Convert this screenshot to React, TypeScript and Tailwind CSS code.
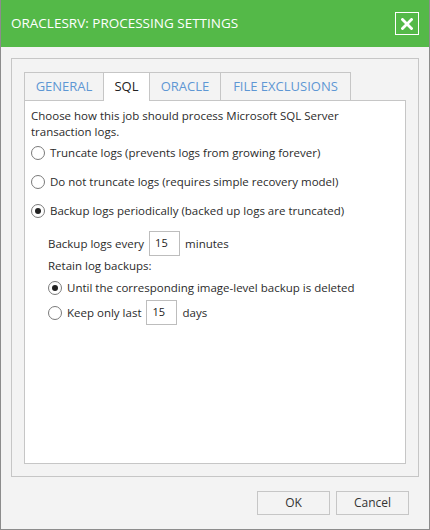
import React from "react";

const font = { fontFamily: '"Open Sans", "Noto Sans", sans-serif' };

function Radio({ checked }: { checked?: boolean }) {
  return (
    <span className="w-[14px] h-[14px] rounded-full border border-[#7a7a7a] bg-white flex items-center justify-center shrink-0">
      {checked && <span className="w-[6px] h-[6px] rounded-full bg-[#222]" />}
    </span>
  );
}

function NumBox({ value }: { value: string }) {
  return (
    <span className="w-[31px] h-[25px] border border-[#bdbdbd] bg-white flex items-center pl-[5px] text-[11px] text-[#222] shrink-0">
      {value}
    </span>
  );
}

export default function App() {
  const tabs = [
    { label: "GENERAL", w: "w-[80px]" },
    { label: "SQL", w: "w-[47px]", active: true },
    { label: "ORACLE", w: "w-[72px]" },
    { label: "FILE EXCLUSIONS", w: "w-[131px]" },
  ];
  return (
    <div
      className="w-[430px] h-[530px] bg-[#f3f3f3] border-l border-r border-b border-[#8c8c8c] flex flex-col text-[#2b2b2b]"
      style={font}
    >
      <div className="h-[47px] bg-[#54b948] flex items-center justify-between pl-[10px] pr-[10px] shrink-0">
        <span className="text-white text-[13.5px]">ORACLESRV: PROCESSING SETTINGS</span>
        <span className="w-[24px] h-[23px] border border-white flex items-center justify-center">
          <svg width="12" height="12" viewBox="0 0 12 12">
            <path d="M1.5 1.5 L10.5 10.5 M10.5 1.5 L1.5 10.5" stroke="white" strokeWidth="2.8" strokeLinecap="square" />
          </svg>
        </span>
      </div>
      <div className="flex flex-col px-[10px] pt-[11px]">
        <div className="h-[419px] border border-[#c6c6c6] pt-[13px] px-[12px] pb-[12px] flex flex-col">
          <div className="flex items-start h-[28px]">
            {tabs.map((t, i) => (
              <div
                key={t.label}
                className={`${t.w} ${i > 0 ? "-ml-px" : ""} border-t border-l border-r border-[#c6c6c6] flex items-center justify-center text-[13px] ${
                  t.active ? "h-[29px] bg-white text-[#222] relative z-10" : "h-[28px] bg-[#f3f3f3] text-[#5e97d4]"
                }`}
              >
                {t.label}
              </div>
            ))}
          </div>
          <div className="flex-1 bg-white border border-[#c6c6c6] pl-[6px] pt-[7px] text-[11.5px]">
            <div className="leading-[16px] w-[330px]">
              Choose how this job should process Microsoft SQL Server transaction logs.
            </div>
            <div className="flex flex-col gap-[15px] mt-[6px]">
              <div className="flex items-center gap-[5px] h-[14px]">
                <Radio />
                <span>Truncate logs (prevents logs from growing forever)</span>
              </div>
              <div className="flex items-center gap-[5px] h-[14px]">
                <Radio />
                <span>Do not truncate logs (requires simple recovery model)</span>
              </div>
              <div className="flex items-center gap-[5px] h-[14px]">
                <Radio checked />
                <span>Backup logs periodically (backed up logs are truncated)</span>
              </div>
            </div>
            <div className="pl-[17px] mt-[13px] flex flex-col">
              <div className="flex items-center h-[25px]">
                <span className="mr-[5px]">Backup logs every</span>
                <NumBox value="15" />
                <span className="ml-[5px]">minutes</span>
              </div>
              <div className="mt-[2px] leading-[16px]">Retain log backups:</div>
              <div className="flex items-center gap-[5px] h-[14px] mt-[7px]">
                <Radio checked />
                <span>Until the corresponding image-level backup is deleted</span>
              </div>
              <div className="flex items-center h-[25px] mt-[5px]">
                <Radio />
                <span className="ml-[5px] mr-[5px]">Keep only last</span>
                <NumBox value="15" />
                <span className="ml-[5px]">days</span>
              </div>
            </div>
          </div>
        </div>
        <div className="flex justify-end gap-[6px] mt-[14px] pr-[10px]">
          <button className="w-[73px] h-[24px] border border-[#c6c6c6] bg-[#f3f3f3] text-[12px] text-[#333]">OK</button>
          <button className="w-[73px] h-[24px] border border-[#c6c6c6] bg-[#f3f3f3] text-[12px] text-[#333]">Cancel</button>
        </div>
      </div>
    </div>
  );
}
